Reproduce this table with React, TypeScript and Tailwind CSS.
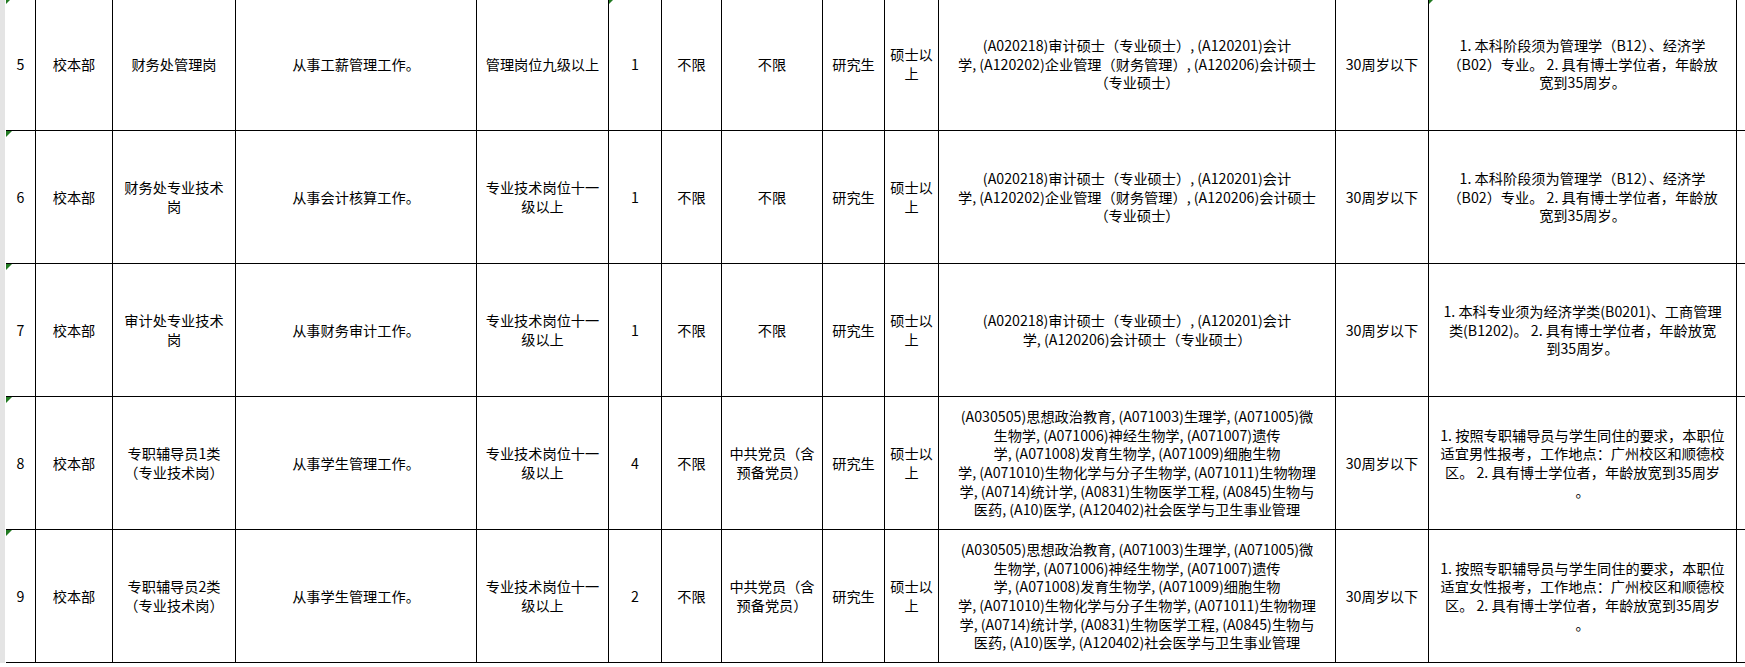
import React from "react";

// column widths measured from the sheet grid lines
const COLS = [30, 77, 123, 241, 132, 53, 60, 101, 62, 54, 397, 93, 308];

type Row = {
  no: string;
  cells: string[][];
  marks?: number[]; // columns with the green error triangle
};

const majorFinance = [
  "(A020218)审计硕士（专业硕士）, (A120201)会计",
  "学, (A120202)企业管理（财务管理）, (A120206)会计硕士",
  "（专业硕士）",
];

const majorCounselor = [
  "(A030505)思想政治教育, (A071003)生理学, (A071005)微",
  "生物学, (A071006)神经生物学, (A071007)遗传",
  "学, (A071008)发育生物学, (A071009)细胞生物",
  "学, (A071010)生物化学与分子生物学, (A071011)生物物理",
  "学, (A0714)统计学, (A0831)生物医学工程, (A0845)生物与",
  "医药, (A10)医学, (A120402)社会医学与卫生事业管理",
];

const noteFinance = [
  "1. 本科阶段须为管理学（B12）、经济学",
  "（B02）专业。 2. 具有博士学位者，年龄放",
  "宽到35周岁。",
];

const rows: Row[] = [
  {
    no: "5",
    marks: [0, 5, 12],
    cells: [
      ["校本部"],
      ["财务处管理岗"],
      ["从事工薪管理工作。"],
      ["管理岗位九级以上"],
      ["1"],
      ["不限"],
      ["不限"],
      ["研究生"],
      ["硕士以", "上"],
      majorFinance,
      ["30周岁以下"],
      noteFinance,
    ],
  },
  {
    no: "6",
    marks: [0],
    cells: [
      ["校本部"],
      ["财务处专业技术", "岗"],
      ["从事会计核算工作。"],
      ["专业技术岗位十一", "级以上"],
      ["1"],
      ["不限"],
      ["不限"],
      ["研究生"],
      ["硕士以", "上"],
      majorFinance,
      ["30周岁以下"],
      noteFinance,
    ],
  },
  {
    no: "7",
    marks: [0],
    cells: [
      ["校本部"],
      ["审计处专业技术", "岗"],
      ["从事财务审计工作。"],
      ["专业技术岗位十一", "级以上"],
      ["1"],
      ["不限"],
      ["不限"],
      ["研究生"],
      ["硕士以", "上"],
      ["(A020218)审计硕士（专业硕士）, (A120201)会计", "学, (A120206)会计硕士（专业硕士）"],
      ["30周岁以下"],
      [
        "1. 本科专业须为经济学类(B0201)、工商管理",
        "类(B1202)。 2. 具有博士学位者，年龄放宽",
        "到35周岁。",
      ],
    ],
  },
  {
    no: "8",
    marks: [0],
    cells: [
      ["校本部"],
      ["专职辅导员1类", "（专业技术岗）"],
      ["从事学生管理工作。"],
      ["专业技术岗位十一", "级以上"],
      ["4"],
      ["不限"],
      ["中共党员（含", "预备党员）"],
      ["研究生"],
      ["硕士以", "上"],
      majorCounselor,
      ["30周岁以下"],
      [
        "1. 按照专职辅导员与学生同住的要求，本职位",
        "适宜男性报考，工作地点：广州校区和顺德校",
        "区。 2. 具有博士学位者，年龄放宽到35周岁",
        "。",
      ],
    ],
  },
  {
    no: "9",
    marks: [0],
    cells: [
      ["校本部"],
      ["专职辅导员2类", "（专业技术岗）"],
      ["从事学生管理工作。"],
      ["专业技术岗位十一", "级以上"],
      ["2"],
      ["不限"],
      ["中共党员（含", "预备党员）"],
      ["研究生"],
      ["硕士以", "上"],
      majorCounselor,
      ["30周岁以下"],
      [
        "1. 按照专职辅导员与学生同住的要求，本职位",
        "适宜女性报考，工作地点：广州校区和顺德校",
        "区。 2. 具有博士学位者，年龄放宽到35周岁",
        "。",
      ],
    ],
  },
];

function Mark() {
  return (
    <span className="absolute left-0 top-0 w-0 h-0 border-t-[6px] border-r-[6px] border-t-[#217a21] border-r-transparent" />
  );
}

function Cell({ width, lines, mark }: { width: number; lines: string[]; mark?: boolean }) {
  return (
    <div
      className="relative shrink-0 h-full border-r border-black flex flex-col items-center justify-center text-center"
      style={{ width }}
    >
      {mark && <Mark />}
      {lines.map((l, i) => (
        <div key={i} className="whitespace-nowrap">
          {l}
        </div>
      ))}
    </div>
  );
}

export default function App() {
  return (
    <div
      className="w-[1745px] h-[667px] overflow-hidden bg-white text-black text-[14.2px] leading-[18.7px]"
      style={{ fontFamily: '"Noto Sans CJK SC", "Noto Sans", sans-serif' }}
    >
      <div className="-mt-[2px] flex flex-col">
        {rows.map((r) => (
          <div key={r.no} className="flex h-[133px] shrink-0">
            <div className="w-[5px] shrink-0 bg-[#e4e4e4]" />
            <div className="w-[1px] shrink-0 bg-white" />
            <div className="flex border-b border-black flex-1 h-full">
              <Cell width={COLS[0]} lines={[r.no]} mark={r.marks?.includes(0)} />
              {r.cells.map((c, i) => (
                <Cell key={i} width={COLS[i + 1]} lines={c} mark={r.marks?.includes(i + 1)} />
              ))}
              <div className="flex-1" />
            </div>
          </div>
        ))}
      </div>
    </div>
  );
}
